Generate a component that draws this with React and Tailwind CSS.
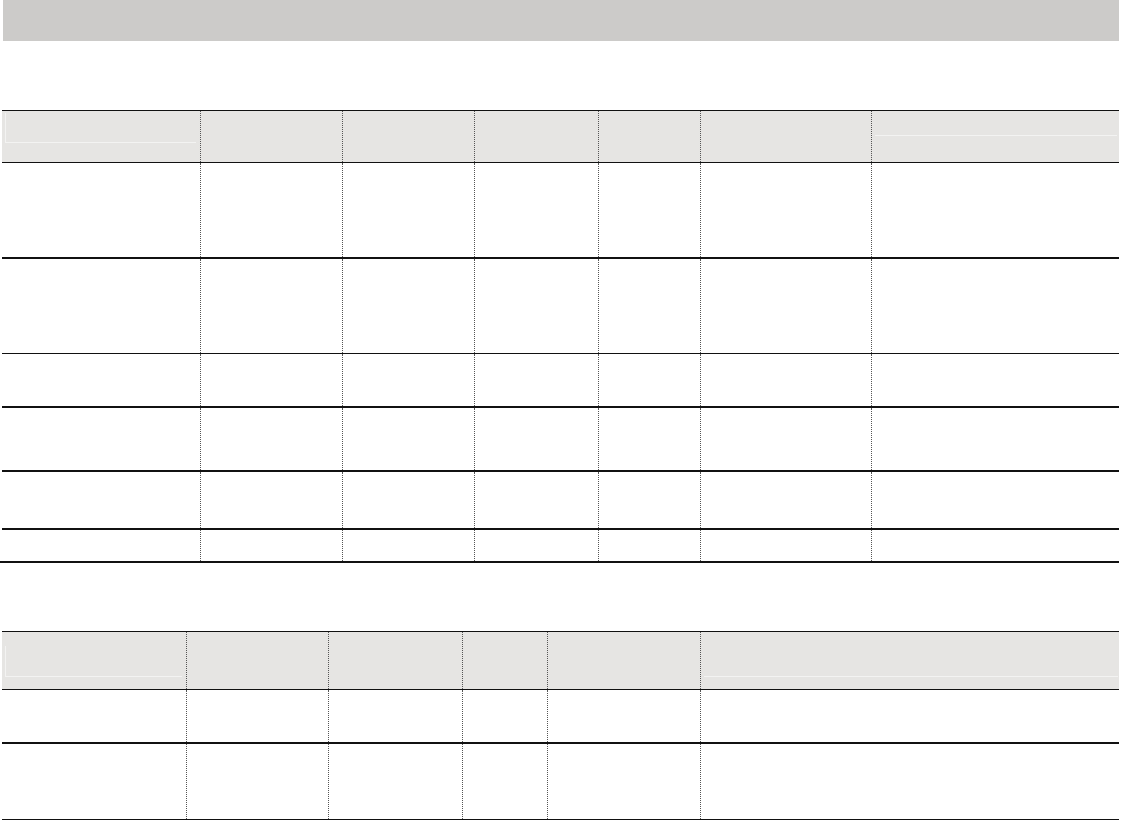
import React from 'react';

const dot = 'border-l border-dotted border-[#555]';

const tableOne = {
    cols: [198, 142, 132, 124, 102, 171, 248],
    rows: [
        { h: 'h-[95px]', b: 'border-t' },
        { h: 'h-[96px]', b: 'border-t-2' },
        { h: 'h-[53px]', b: 'border-t' },
        { h: 'h-[64px]', b: 'border-t-2' },
        { h: 'h-[58px]', b: 'border-t-2' },
        { h: 'h-[33px]', b: 'border-t-2' },
    ],
};

const tableTwo = {
    cols: [184, 142, 134, 85, 153, 419],
    rows: [
        { h: 'h-[53px]', b: 'border-t' },
        { h: 'h-[77px]', b: 'border-t-2' },
    ],
};

// one row of empty cells, dotted rules between them
const Row = ({ cols, className, children }) => (
    <div className={`flex ${className}`}>
        {cols.map((w, i) => (
            <div key={i} className={`h-full ${i > 0 ? dot : ''}`} style={{ width: w }}>
                {children ? children(i) : null}
            </div>
        ))}
    </div>
);

const App = () => {
    return (
        <div className="w-[1121px] h-[820px] bg-white overflow-hidden">
            {/* title band */}
            <div className="ml-[3px] w-[1116px] h-[41px] bg-[#cccbc9]" />

            {/* first table */}
            <div className="mt-[69px] ml-[2px] w-[1117px]">
                <Row cols={tableOne.cols} className="h-[52px] border-t border-[#111] bg-[#e6e5e3]">
                    {(i) =>
                        i === 0 ? (
                            <div className="ml-[3px] mt-[2px] w-[191px] h-[30px] border-l border-b border-[#f3f3f2]" />
                        ) : i === 6 ? (
                            <div className="ml-[3px] w-[242px] h-[25px] border-b border-[#f3f3f2]" />
                        ) : null
                    }
                </Row>
                {tableOne.rows.map((r, i) => (
                    <Row key={i} cols={tableOne.cols} className={`${r.h} ${r.b} border-[#111]`} />
                ))}
            </div>
            <div className="w-[1119px] h-[2px] bg-[#111]" />

            {/* second table */}
            <div className="mt-[68px] ml-[2px] w-[1117px]">
                <Row cols={tableTwo.cols} className="h-[58px] border-t border-[#111] bg-[#e6e5e3]">
                    {(i) =>
                        i === 0 ? (
                            <div className="ml-[3px] mt-[14px] w-[177px] h-[31px] border-l border-b border-[#f3f3f2]" />
                        ) : i === 5 ? (
                            <div className="ml-[3px] w-[414px] h-[45px] border-b border-[#f3f3f2]" />
                        ) : null
                    }
                </Row>
                {tableTwo.rows.map((r, i) => (
                    <Row key={i} cols={tableTwo.cols} className={`${r.h} ${r.b} border-[#111]`} />
                ))}
                <div className="h-px bg-[#111]" />
            </div>
        </div>
    );
};

export default App;
